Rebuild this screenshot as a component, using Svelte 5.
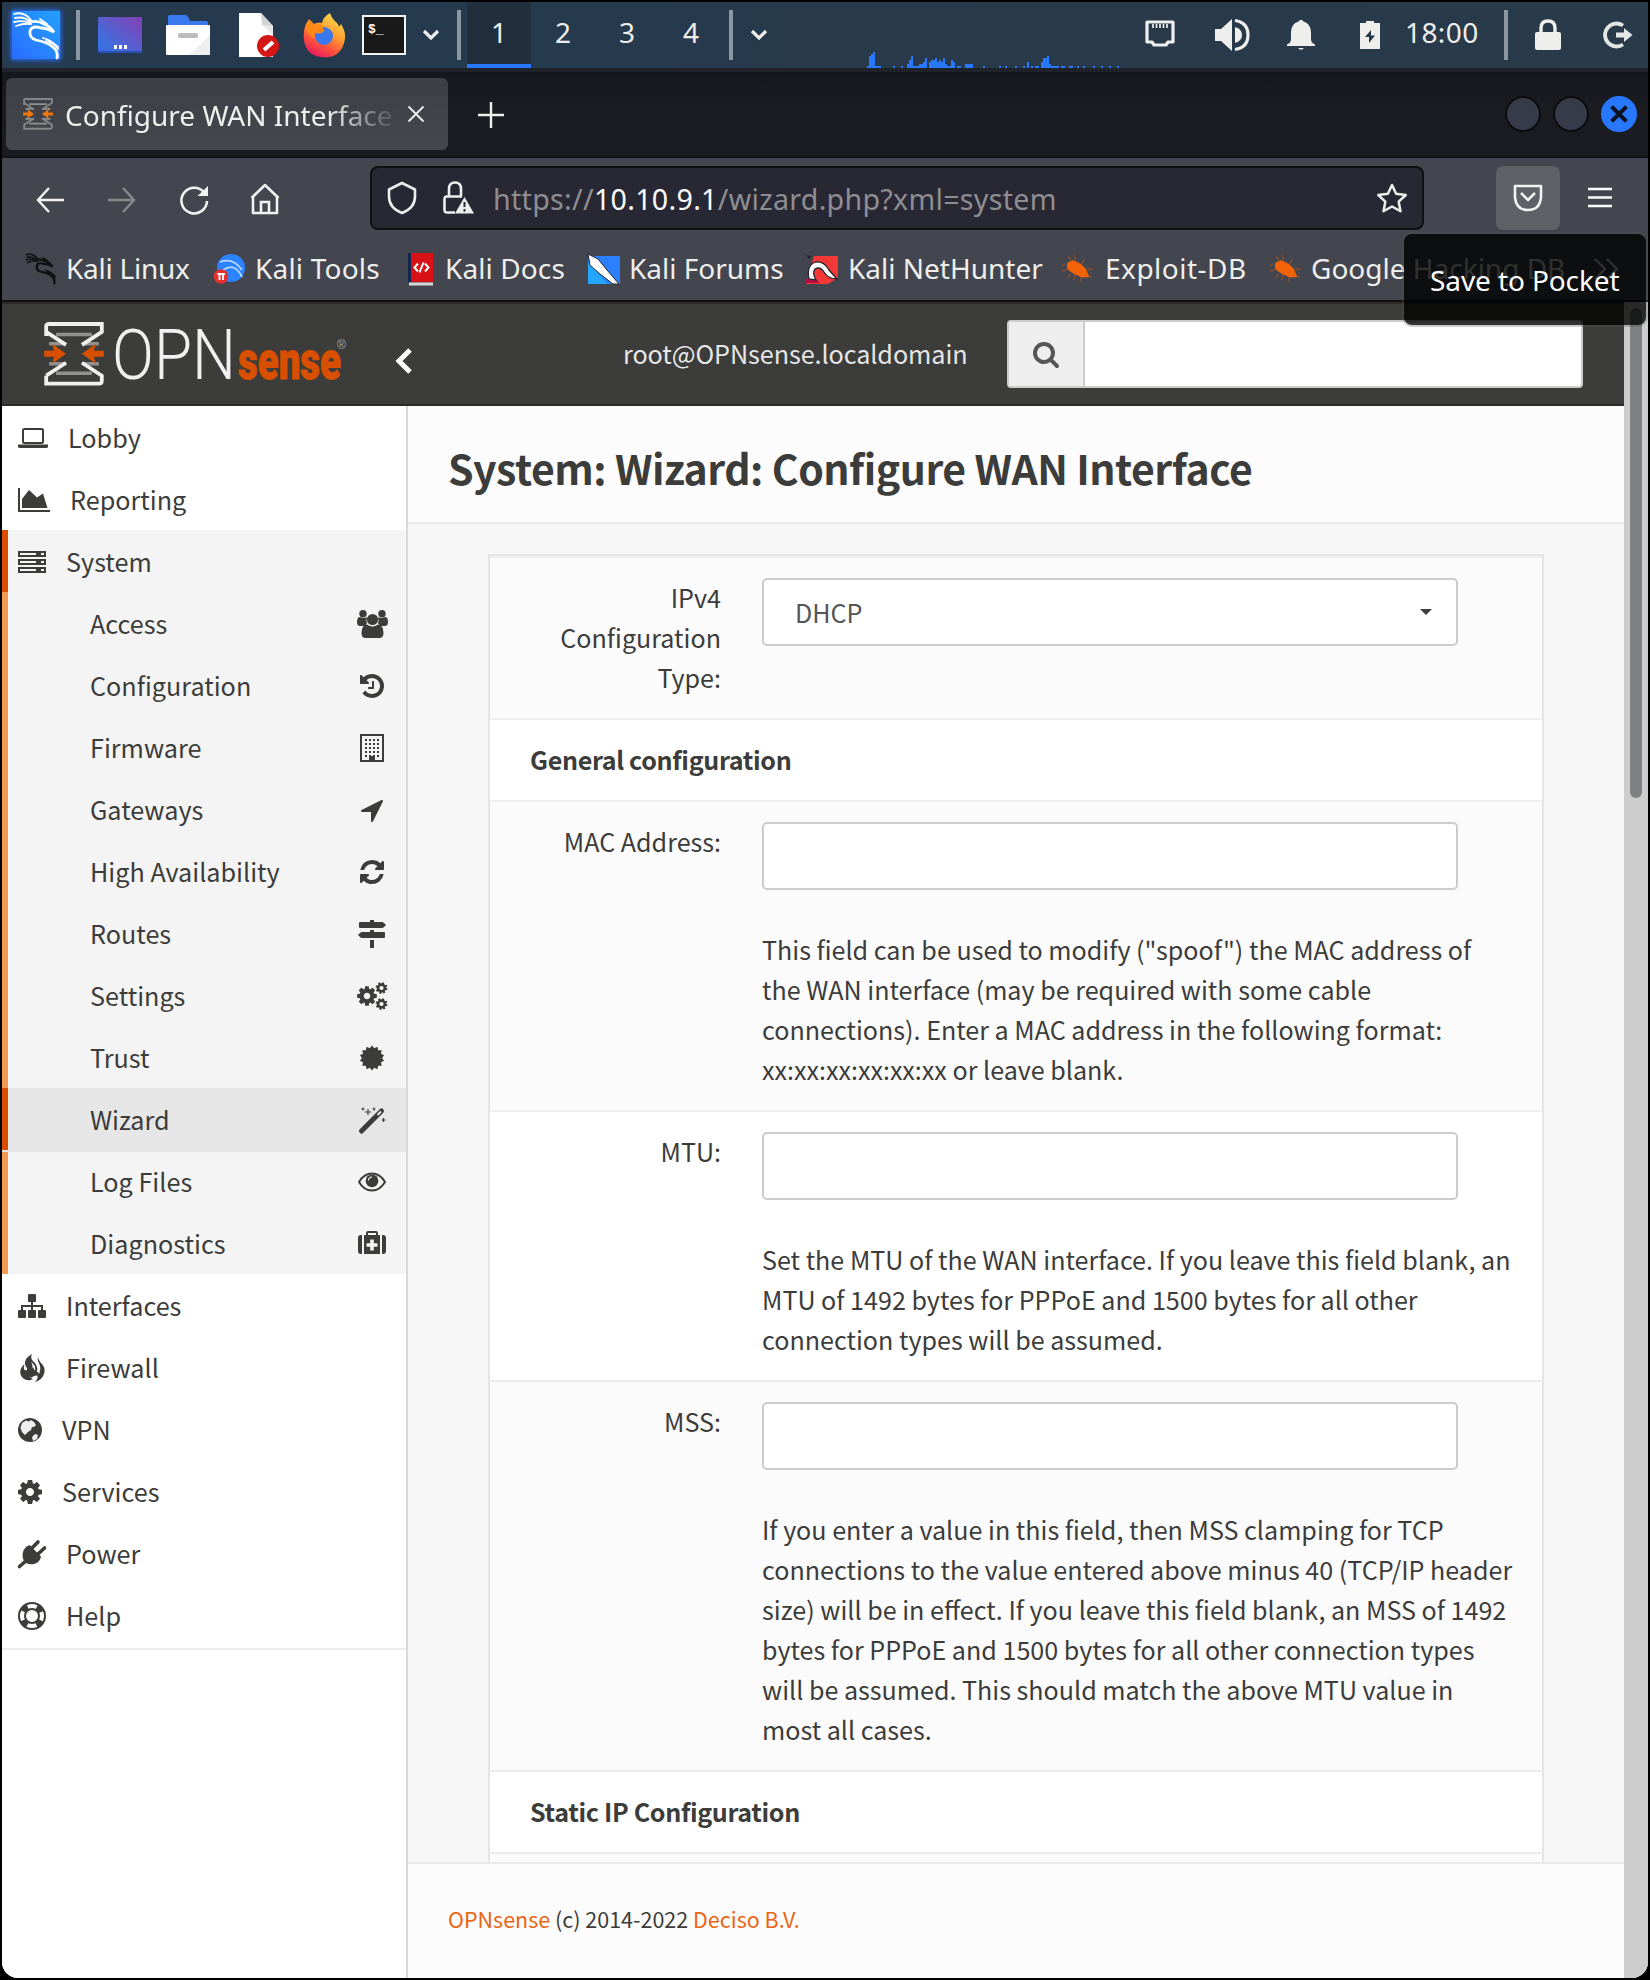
<script>
  const menuTop = [
    { label: 'Lobby', icon: 'laptop', w: 30, gap: 20 },
    { label: 'Reporting', icon: 'area', w: 32, gap: 20 },
    { label: 'System', icon: 'server', w: 28, gap: 20, active: true }
  ];
  const submenu = [
    { label: 'Access', icon: 'users' },
    { label: 'Configuration', icon: 'history' },
    { label: 'Firmware', icon: 'building' },
    { label: 'Gateways', icon: 'arrow' },
    { label: 'High Availability', icon: 'refresh' },
    { label: 'Routes', icon: 'signs' },
    { label: 'Settings', icon: 'cogs' },
    { label: 'Trust', icon: 'certificate' },
    { label: 'Wizard', icon: 'magic', active: true },
    { label: 'Log Files', icon: 'eye' },
    { label: 'Diagnostics', icon: 'medkit' }
  ];
  const menuBottom = [
    { label: 'Interfaces', icon: 'sitemap', w: 28, gap: 20 },
    { label: 'Firewall', icon: 'fire', w: 28, gap: 20 },
    { label: 'VPN', icon: 'globe', w: 24, gap: 20 },
    { label: 'Services', icon: 'cog', w: 24, gap: 20 },
    { label: 'Power', icon: 'plug', w: 28, gap: 20 },
    { label: 'Help', icon: 'ring', w: 28, gap: 20 }
  ];
  const fields = [
    {
      label: 'MAC Address:',
      help: [
        'This field can be used to modify ("spoof") the MAC address of',
        'the WAN interface (may be required with some cable',
        'connections). Enter a MAC address in the following format:',
        'xx:xx:xx:xx:xx:xx or leave blank.'
      ]
    },
    {
      label: 'MTU:',
      white: true,
      help: [
        'Set the MTU of the WAN interface. If you leave this field blank, an',
        'MTU of 1492 bytes for PPPoE and 1500 bytes for all other',
        'connection types will be assumed.'
      ]
    },
    {
      label: 'MSS:',
      help: [
        'If you enter a value in this field, then MSS clamping for TCP',
        'connections to the value entered above minus 40 (TCP/IP header',
        'size) will be in effect. If you leave this field blank, an MSS of 1492',
        'bytes for PPPoE and 1500 bytes for all other connection types',
        'will be assumed. This should match the above MTU value in',
        'most all cases.'
      ]
    }
  ];
  // CPU graph: [column, height] pairs, two pixels per column
  const load = [
    [0, 2], [1, 12], [2, 14], [3, 16], [4, 2], [5, 2], [6, 2], [13, 2], [17, 2], [20, 4], [21, 8], [22, 12],
    [23, 2], [24, 2], [25, 2], [26, 4], [27, 4], [28, 6], [29, 10], [31, 6], [32, 8], [33, 8], [34, 10], [35, 6],
    [36, 8], [37, 6], [38, 10], [39, 4], [40, 2], [41, 2], [42, 8], [43, 6], [45, 2], [46, 2], [49, 4], [50, 4],
    [51, 4], [52, 4], [58, 2], [66, 2], [69, 2], [74, 2], [78, 2], [80, 6], [82, 2], [84, 2], [85, 2], [87, 6],
    [88, 10], [89, 10], [90, 12], [91, 4], [92, 2], [93, 2], [94, 2], [95, 2], [97, 2], [98, 2], [101, 2], [102, 2],
    [105, 2], [108, 2], [113, 2], [117, 2], [121, 2], [125, 2]
  ];
  const loadPath = load.map(([c, h]) => `M${c * 2} 16v-${h}h2v${h}z`).join('');

  const star = (cx, cy, n, r1, r2) =>
    Array.from({ length: n * 2 }, (_, i) => {
      const r = i % 2 ? r2 : r1;
      const a = (Math.PI * i) / n - Math.PI / 2;
      return `${(cx + r * Math.cos(a)).toFixed(2)},${(cy + r * Math.sin(a)).toFixed(2)}`;
    }).join(' ');

  const cogPath =
    'M1152 896q0-106-75-181t-181-75-181 75-75 181 75 181 181 75 181-75 75-181zm512-109v222q0 12-8 23t-20 13l-185 28q-19 54-39 91 35 50 107 138 10 12 10 25t-9 23q-27 37-99 108t-94 71q-12 0-26-9l-138-108q-44 23-91 38-16 136-29 186-7 28-36 28h-222q-14 0-24.5-8.5t-11.5-21.5l-28-184q-49-16-90-37l-141 107q-10 9-25 9-14 0-25-11-126-114-165-168-7-10-7-23 0-12 8-23 15-21 51-66.5t54-70.5q-27-50-41-99l-183-27q-13-2-21-12.5t-8-23.5v-222q0-12 8-23t19-13l186-28q14-46 39-92-40-57-107-138-10-12-10-24 0-10 9-23 26-36 98.5-107.5t94.5-71.5q13 0 26 10l138 107q44-23 91-38 16-136 29-186 7-28 36-28h222q14 0 24.5 8.5t11.5 21.5l28 184q49 16 90 37l142-107q9-9 24-9 13 0 25 10 129 119 165 170 7 8 7 22 0 12-8 23-15 21-51 66.5t-54 70.5q26 50 41 98l183 28q13 2 21 12.5t8 23.5z';
</script>

{#snippet icon(name)}
  {#if name === 'laptop'}
    <svg class="fa" width="30" height="28" viewBox="0 0 30 28"><rect x="5" y="5" width="20" height="14" rx="1.5" fill="none" stroke="currentColor" stroke-width="2" /><path d="M0 20.500h30v2q0 1.500-2 1.500H2q-2 0-2-1.500z" fill="currentColor" /></svg>
  {:else if name === 'area'}
    <svg class="fa" width="32" height="28" viewBox="0 0 32 28"><path d="M1 2v23h31" fill="none" stroke="currentColor" stroke-width="2" /><path d="M4 22V13l7-9 8 7.500 6-4L29.500 22z" fill="currentColor" /></svg>
  {:else if name === 'server'}
    <svg class="fa" width="28" height="28" viewBox="0 0 28 28"><path fill="none" stroke="currentColor" stroke-width="2" d="M1 4h26v4H1zM1 12h26v4H1zM1 20h26v4H1z" /><path fill="currentColor" d="M18 4h5v4h-5zM18 12h5v4h-5zM18 20h5v4h-5z" /></svg>
  {:else if name === 'users'}
    <svg class="fa" width="31" height="28" viewBox="0 0 31 28" fill="currentColor"><circle cx="6" cy="3.700" r="3.700" /><circle cx="25" cy="3.700" r="3.700" /><path d="M0 12q0-5 3-5 4 2 7 0-1 4 0 6-1 2-2 3H3q-3 0-3-4zM31 12q0-5-3-5-4 2-7 0 1 4 0 6 1 2 2 3h5q3 0 3-4z" /><circle cx="15.500" cy="9.500" r="5.600" /><path d="M4.500 23q0-8 5.500-8.500 5.500 4 11 0 5.500.5 5.500 8.500 0 5-4 5h-14q-4 0-4-5z" /></svg>
  {:else if name === 'history'}
    <svg class="fa" width="28" height="28" viewBox="0 0 1792 1792" fill="currentColor"><path d="M1664 896q0 156-61 298t-164 245-245 164-298 61q-172 0-327-72.500t-264-204.500q-7-10-6.500-22.500t8.500-20.500l137-138q10-9 25-9 16 2 23 12 73 95 179 147t225 52q104 0 198.500-40.500t163.500-109.500 109.500-163.500 40.500-198.500-40.500-198.500-109.500-163.500-163.500-109.500-198.500-40.500q-98 0-188 35.500t-160 101.500l137 138q31 30 14 69-17 40-59 40h-448q-26 0-45-19t-19-45v-448q0-42 40-59 39-17 69 14l130 129q107-101 244.500-156.500t284.500-55.500q156 0 298 61t245 164 164 245 61 298zm-640-288v448q0 14-9 23t-23 9h-320q-14 0-23-9t-9-23v-64q0-14 9-23t23-9h224v-352q0-14 9-23t23-9h64q14 0 23 9t9 23z" /></svg>
  {:else if name === 'building'}
    <svg class="fa" width="24" height="28" viewBox="0 0 24 28"><path d="M1 1h22v26H1z" fill="none" stroke="currentColor" stroke-width="2" /><path d="M5 6h15M5 10h15M5 14h15M5 18h15M5 22h15" stroke="currentColor" stroke-width="2" stroke-dasharray="2 2" /><path d="M9 22h6v5H9z" fill="currentColor" /></svg>
  {:else if name === 'arrow'}
    <svg class="fa" width="28" height="28" viewBox="0 0 1792 1792" fill="currentColor"><path d="M1593 349l-640 1280q-17 35-57 35-5 0-15-2-22-5-35.500-22.500t-13.500-39.500v-576h-576q-22 0-39.500-13.500t-22.500-35.500 4-42 29-30l1280-640q13-7 29-7 27 0 45 19 15 14 18.500 34.500t-6.500 39.500z" /></svg>
  {:else if name === 'refresh'}
    <svg class="fa" width="28" height="28" viewBox="0 0 1792 1792" fill="currentColor"><path d="M1639 1056q0 5-1 7-64 268-268 434.500t-478 166.500q-146 0-282.500-55t-243.500-157l-129 129q-19 19-45 19t-45-19-19-45v-448q0-26 19-45t45-19h448q26 0 45 19t19 45-19 45l-137 137q71 66 161 102t187 36q134 0 250-65t186-179q11-17 53-117 8-23 30-23h192q13 0 22.500 9.500t9.500 22.500zm25-800v448q0 26-19 45t-45 19h-448q-26 0-45-19t-19-45 19-45l138-138q-148-137-349-137-134 0-250 65t-186 179q-11 17-53 117-8 23-30 23h-199q-13 0-22.500-9.500t-9.500-22.500v-7q65-268 270-434.500t480-166.500q146 0 284 55.500t245 156.500l130-129q19-19 45-19t45 19 19 45z" /></svg>
  {:else if name === 'signs'}
    <svg class="fa" width="28" height="28" viewBox="0 0 28 28" fill="currentColor"><path d="M12 0h4v2h8q1 0 2 1l2 2-2 2q-1 1-2 1H2Q1 8 1 7V3q0-1 1-1h10zM12 10h4v2h10q1 0 1 1v4q0 1-1 1H4q-1 0-2-1l-2-2 2-2q1-1 2-1h8zM12 20h4v8h-4z" /></svg>
  {:else if name === 'cogs'}
    <svg class="fa" width="31" height="28" viewBox="0 0 31 28"><g fill="currentColor" transform="translate(-1.500 2.500) scale(.0128)"><path d={cogPath} /></g><g fill="none" stroke="currentColor"><circle cx="24.500" cy="6" r="3.400" stroke-width="2.600" /><circle cx="24.500" cy="6" r="5" stroke-width="1.800" stroke-dasharray="2 1.930" /><circle cx="24.500" cy="22" r="3.400" stroke-width="2.600" /><circle cx="24.500" cy="22" r="5" stroke-width="1.800" stroke-dasharray="2 1.930" /></g></svg>
  {:else if name === 'certificate'}
    <svg class="fa" width="28" height="28" viewBox="0 0 28 28" fill="currentColor"><polygon points={star(14, 14, 14, 12.400, 10)} /></svg>
  {:else if name === 'magic'}
    <svg class="fa" width="28" height="28" viewBox="0 0 28 28"><path d="M3.500 25L23.500 5" stroke="currentColor" stroke-width="5" stroke-linecap="round" /><path d="M19.500 9L23 5.500" stroke="#e6e6e6" stroke-width="2" /><path d="M10 3v6M7 6h6M5 1.500v3M3.500 3h3M16 1.500v3M14.500 3h3M25.500 12v4M23.500 14h4" stroke="currentColor" stroke-width="1.100" /></svg>
  {:else if name === 'eye'}
    <svg class="fa" width="28" height="28" viewBox="0 0 28 28"><path d="M1 14Q6 5.500 14 5.500T27 14Q22 22.500 14 22.500T1 14z" fill="none" stroke="currentColor" stroke-width="2" /><circle cx="14" cy="12.800" r="6.400" fill="currentColor" /><path d="M10.500 12.500q0-3.300 3.500-3.500" fill="none" stroke="#f4f4f4" stroke-width="1.200" /></svg>
  {:else if name === 'medkit'}
    <svg class="fa" width="28" height="28" viewBox="0 0 28 28" fill="currentColor"><path d="M9 6V3q0-1 1-1h8q1 0 1 1v3" fill="none" stroke="currentColor" stroke-width="2" /><path d="M6 5h16v19H6zM4 5v19H3q-3 0-3-3V8q0-3 3-3zM24 5v19h1q3 0 3-3V8q0-3-3-3z" /><path d="M12.200 9.500h3.600v3.700h3.700v3.600h-3.700v3.700h-3.600v-3.700H8.500v-3.600h3.700z" fill="#f4f4f4" /></svg>
  {:else if name === 'sitemap'}
    <svg class="fa" width="28" height="28" viewBox="0 0 28 28"><path d="M4 19v-5h20v5M14 8v11" fill="none" stroke="currentColor" stroke-width="2" /><g fill="currentColor"><rect x="10" y="2" width="8" height="8" rx="1" /><rect y="18" width="8" height="8" rx="1" /><rect x="10" y="18" width="8" height="8" rx="1" /><rect x="20" y="18" width="8" height="8" rx="1" /></g></svg>
  {:else if name === 'fire'}
    <svg class="fa" width="28" height="28" viewBox="0 0 28 28" fill="currentColor"><path d="M14 0c-7 4-9 9-5 14 1 3-2 3-3 1-.5-2 0-3 .5-5C2 14 1 19 4 23c3 4 8 4 11 2-4-1-5-5-2-9 2-3 2-5 0-8 3 2 5 5 4 8-1 2 1 3 2 1s0-5-2-8c-3-3-5-5-3-9z" /><path d="M20 3c1 5 4 6 6 10 2 5-1 13-9 15 3-3 3-5 2-7 2 0 4-4 3-9-1-4-3-5-2-9z" /><path d="M9 14q3 3 6-1l2 4 3 1 1 3-5 1-3 2-4-4z" /></svg>
  {:else if name === 'globe'}
    <svg class="fa" width="24" height="28" viewBox="0 0 24 28"><circle cx="12" cy="14" r="12" fill="currentColor" /><path d="M4 7l4-2.500 3 1 2-1.500 3 2 2 3-2 2-2 0-1 3-3 2-3 3-3-3-1.500-4zM17 18l3 1-1 4-4 2-1-4z" fill="#fff" opacity=".92" /></svg>
  {:else if name === 'cog'}
    <svg class="fa" width="24" height="28" viewBox="128 0 1536 1792" fill="currentColor"><path d={cogPath} /></svg>
  {:else if name === 'plug'}
    <svg class="fa" width="28" height="28" viewBox="0 0 28 28"><path d="M1.500 26.500L9 20M14 8l6-6M20 14l6.500-6" stroke="currentColor" stroke-width="3.600" stroke-linecap="round" /><path d="M11.500 5L23 16.500q-1 6-7 7.500-6 1-10-2.500Q3 15 6 9.500 8 6 11.500 5z" fill="currentColor" /></svg>
  {:else if name === 'ring'}
    <svg class="fa" width="28" height="28" viewBox="0 0 28 28" fill="none" stroke="currentColor"><circle cx="14" cy="14" r="13" stroke-width="2" /><circle cx="14" cy="14" r="7" stroke-width="2" /><circle cx="14" cy="14" r="10" stroke-width="6" stroke-dasharray="6.500 9.208" stroke-dashoffset="-4.600" /></svg>
  {/if}
{/snippet}

{#snippet hourglass(size, steel, accent)}
  <svg width={size} height={size * 1.06} viewBox="0 0 60 64"><g fill="none" stroke="#919191" stroke-width="3.500"><path d="M12 12.500h36M12 51.500h36M5 22h17M38 22h17M5 42h17M38 42h17" /></g><g fill="none" stroke={steel} stroke-width="3.800"><path d="M2 14V4q0-2 3-2h53v8L38 23M2 10l20 13M2 54v8h53q3 0 3-3v-5L38 41M2 54l20-13" /></g><g fill={accent}><path d="M0 29h10l-2-7 14 10-14 10 2-7H0zM60 29H50l2-7-14 10 14 10-2-7h10z" /></g></svg>
{/snippet}

{#snippet beetle()}
  <svg width="31" height="28" viewBox="0 0 31 28"><path d="M9 5L6 1M14 5L12 0M20 9l2-5M25 14h6M3 9l-3 2M5 15l-5 1M9 19l-4 4M14 20l-3 5M19 21v6M26 20l4 3" stroke="#8a5136" stroke-width="1.300" /><path d="M5 8l6-3 8 4 5 5 3 8-7 .5-8-3.500-7-5z" fill="#f26207" /></svg>
{/snippet}

<div class="screen">
  <header class="panel">
    <svg class="kali" width="64" height="64" viewBox="0 0 64 64">
      <defs>
        <linearGradient id="k" x1="0" y1="1" x2="1" y2="0"><stop offset="0" stop-color="#2a6cff" /><stop offset="1" stop-color="#22a2ff" /></linearGradient>
        <filter id="glow" x="-30%" y="-30%" width="160%" height="160%"><feGaussianBlur stdDeviation="2.500" /></filter>
      </defs>
      <rect x="7" y="7" width="50" height="50" rx="3" fill="#2671ff" filter="url(#glow)" />
      <rect x="8" y="8" width="48" height="48" fill="url(#k)" />
      <g fill="none" stroke="#fff" stroke-linecap="round"><path d="M10 11q10-3 17 6M11 15q9-2 16 4M10 19q9-2 17 1M12 23q8-3 15-2" stroke-width="1.800" /><path d="M25 19q9-2 15 2 6 2 10 8-7-4-13-4-9-3-11 3-1 7 6 9 14 3 19 9 3 4 2 9" stroke-width="2.800" /><path d="M36 16l7 5M42 38q8 2 12 8M39 35q8 2 15 9" stroke-width="1.800" /></g>
    </svg>
    <i class="sep s1"></i>
    <svg class="p-desk" width="44" height="36" viewBox="0 0 44 36"><defs><linearGradient id="d" x1="0" y1="1" x2="1" y2="0"><stop offset=".2" stop-color="#3d70df" /><stop offset="1" stop-color="#8540b4" /></linearGradient></defs><rect width="44" height="36" rx="1" fill="url(#d)" /><path d="M0 35h44" stroke="#2b50b5" stroke-width="2" /><path d="M16 30h3M21 30h3M26 30h3" stroke="#fff" stroke-width="4" /></svg>
    <svg class="p-folder" width="44" height="42" viewBox="0 0 44 42"><path d="M2 12V3q0-2 2-2h15q3 0 4 4l1 2h16q2 0 2 2v3z" fill="#397bee" /><rect y="11" width="44" height="30" rx="1" fill="#fff" /><path d="M23 41L44 21v20z" fill="#efefef" /><rect x="12" y="19" width="20" height="5" rx="2" fill="#bdbdbd" /></svg>
    <svg class="p-doc" width="42" height="46" viewBox="0 0 42 46"><path d="M1 1h22l12 13v31H1z" fill="#fff" /><path d="M23 1l12 13-11-1z" fill="#d2d2d2" /><path d="M24 13l11 10V14z" fill="#e7e7e7" /><circle cx="30" cy="34" r="11" fill="#d51616" /><path d="M26 38l9-8" stroke="#fff" stroke-width="4" /></svg>
    <svg class="p-fox" width="43" height="46" viewBox="0 0 43 46"><defs><linearGradient id="f" x1=".8" y1="0" x2=".3" y2="1"><stop offset="0" stop-color="#ffe04b" /><stop offset=".45" stop-color="#ff9a30" /><stop offset=".75" stop-color="#ff4a3f" /><stop offset="1" stop-color="#e01c62" /></linearGradient></defs><path d="M3 12l3-5 5 5q4-2 8-1 1-6 8-10 2 6 6 9 3 3 3 5l2-3q5 8 4 15Q39 45 22 45.500 3 45 1 28 0 18 3 12z" fill="url(#f)" /><circle cx="21" cy="24" r="9" fill="#3978ee" /><path d="M3 16l3-8 6 5q5-2 8 1-1 4 2 4-4 5-9 3-2 0-2 6-7-5-8-11z" fill="#ff8a16" /></svg>
    <div class="terminal"><span>$_</span></div>
    <svg class="p-c1" width="18" height="12" viewBox="0 0 18 12"><path d="M2 2l7 7 7-7" fill="none" stroke="#eeeeec" stroke-width="3.200" /></svg>
    <i class="sep s2"></i>
    <div class="ws on">1</div>
    <div class="ws">2</div>
    <div class="ws">3</div>
    <div class="ws">4</div>
    <i class="sep s3"></i>
    <svg class="p-c2" width="18" height="12" viewBox="0 0 18 12"><path d="M2 2l7 7 7-7" fill="none" stroke="#eeeeec" stroke-width="3.200" /></svg>
    <svg class="graph" width="252" height="16" viewBox="0 0 252 16"><path d={loadPath} fill="#2777ff" /></svg>
    <svg class="p-net" width="30" height="28" viewBox="0 0 30 28"><path d="M2 2h26v20h-5l-2 3H9l-2-3H2z" fill="none" stroke="#eeeeec" stroke-width="3.200" stroke-linejoin="round" /><path d="M8 4v4M11.500 4v4M15 4v4M18.500 4v4M22 4v4" stroke="#eeeeec" stroke-width="1.700" /></svg>
    <svg class="p-vol" width="36" height="34" viewBox="0 0 36 34"><path d="M0 11h6L17 1v32L6 23H0z" fill="#eeeeec" /><path d="M20 9q7 2 7 8t-7 8z" fill="#eeeeec" /><path d="M20 2.500q13 2 13 14.500T20 31.500" fill="none" stroke="#eeeeec" stroke-width="3.200" /></svg>
    <svg class="p-bell" width="28" height="32" viewBox="0 0 28 32" fill="#eeeeec"><path d="M11.500 2.500q2.500-3.500 5 0Q24 5 24 13v7q0 4 4 5.500V27H0v-1.500Q4 24 4 20v-7q0-8 7.500-10.500zM11 29h6q-3 3.500-6 0z" /></svg>
    <svg class="p-bat" width="20" height="28" viewBox="0 0 20 28"><path d="M6 0h8v2h6v26H0V2h6z" fill="#eeeeec" /><path d="M11 9l-6 7h4v6l6-7.500h-4z" fill="#28394a" /></svg>
    <span class="clock">18:00</span>
    <i class="sep s4"></i>
    <svg class="p-lock" width="26" height="32" viewBox="0 0 26 32"><rect y="13" width="26" height="18" rx="2" fill="#eeeeec" /><path d="M6 15V9q0-7 7-7t7 7v6" fill="none" stroke="#eeeeec" stroke-width="3.400" /></svg>
    <svg class="p-out" width="31" height="28" viewBox="0 0 31 28"><path d="M21 4.500A11.500 11.500 0 1 0 21 23.500" fill="none" stroke="#e4e6e6" stroke-width="3.800" /><path d="M14 11.500h8V7l8.500 7-8.500 7v-4.500h-8z" fill="#e4e6e6" /></svg>
  </header>

  <div class="tabs">
    <div class="tab">
      {@render hourglass(30, '#848688', '#ee7711')}
      <span class="tab-title">Configure WAN Interface</span>
      <svg width="18" height="18" viewBox="0 0 18 18"><path d="M1.500 1.500l15 15M16.500 1.500l-15 15" stroke="#e8e8e8" stroke-width="2" /></svg>
    </div>
    <svg class="plus" width="26" height="26" viewBox="0 0 26 26"><path d="M13 0v26M0 13h26" stroke="#eeeeec" stroke-width="2.400" /></svg>
    <div class="controls">
      <i></i><i></i>
      <i class="close"><svg width="18" height="18" viewBox="0 0 18 18"><path d="M3 3l12 12M15 3L3 15" stroke="#0d1220" stroke-width="4" stroke-linecap="square" /></svg></i>
    </div>
  </div>

  <nav class="toolbar">
    <svg class="t-back" width="28" height="28" viewBox="0 0 28 28"><path d="M13 2L2 14l11 12M2 14h26" fill="none" stroke="#f2f2f2" stroke-width="2.400" /></svg>
    <svg class="t-fwd" width="28" height="28" viewBox="0 0 28 28"><path d="M15 2l11 12-11 12M26 14H0" fill="none" stroke="#87898d" stroke-width="2.400" /></svg>
    <svg class="t-rel" width="30" height="30" viewBox="0 0 30 30"><path d="M25.500 8A12.800 12.800 0 1 0 28 16" fill="none" stroke="#f2f2f2" stroke-width="2.600" /><path d="M29 1v10H18.500z" fill="#f2f2f2" /></svg>
    <svg class="t-home" width="30" height="32" viewBox="0 0 30 32"><path d="M1.500 15L15 2l13.500 13M3 14v16h24V14" fill="none" stroke="#f2f2f2" stroke-width="2.600" stroke-linejoin="round" /><path d="M11 30V19h8v11" fill="none" stroke="#f2f2f2" stroke-width="2.600" /></svg>
    <div class="url">
      <svg class="u-shield" width="30" height="34" viewBox="0 0 30 34"><path d="M15 2l13 6.500v7Q28 27 15 32 2 27 2 15.500v-7z" fill="none" stroke="#eeeeef" stroke-width="2.600" stroke-linejoin="round" /></svg>
      <svg class="u-lock" width="31" height="34" viewBox="0 0 31 34"><path d="M6 15V8q0-6.500 6-6.500T18 8v7M12 31.500H4q-2.500 0-2.500-2.500V18q0-2.500 2.500-2.500h15" fill="none" stroke="#eeeeef" stroke-width="2.600" /><path d="M21.500 16L31 32.500H12z" fill="#eeeeef" /><path d="M21.500 21v5M21.500 28v2.500" stroke="#282833" stroke-width="2" /></svg>
      <span class="addr">https://<b>10.10.9.1</b>/wizard.php?xml=system</span>
      <svg class="u-star" width="32" height="33" viewBox="0 0 32 33"><polygon points={star(16, 17.500, 5, 14.500, 7)} fill="none" stroke="#eeeeef" stroke-width="2.500" stroke-linejoin="round" /></svg>
    </div>
    <div class="pocket"><svg width="30" height="28" viewBox="0 0 30 28"><path d="M2 2h26v11Q27 26 15 26T2 13z" fill="none" stroke="#f2f2f2" stroke-width="2.600" stroke-linejoin="round" /><path d="M8 9l7 7 7-7" fill="none" stroke="#f2f2f2" stroke-width="2.600" /></svg></div>
    <svg class="t-menu" width="24" height="22" viewBox="0 0 24 22"><path d="M0 2h24M0 10.500h24M0 19h24" stroke="#fbfbfe" stroke-width="2.400" /></svg>
  </nav>

  <div class="bookmarks">
    <a class="bm b1"><svg width="32" height="34" viewBox="8 8 49 50"><g fill="none" stroke="#101214" stroke-linecap="round"><path d="M10 11q10-3 17 6M11 15q9-2 16 4M10 19q9-2 17 1M12 23q8-3 15-2" stroke-width="2.400" /><path d="M25 19q9-2 15 2 6 2 10 8-7-4-13-4-9-3-11 3-1 7 6 9 14 3 19 9 3 4 2 9" stroke-width="3.800" /><path d="M36 16l7 5M42 38q8 2 12 8M39 35q8 2 15 9" stroke-width="2.400" /></g></svg><span>Kali Linux</span></a>
    <a class="bm b2"><svg width="31" height="32" viewBox="0 0 31 32"><circle cx="17" cy="15" r="14" fill="#2b83ff" /><path d="M6 9q13-5 22 8M9 17q12-8 19 7" fill="none" stroke="#b9d8ff" stroke-width="1.800" /><circle cx="7" cy="23.500" r="7.300" fill="#e5322f" /><path d="M3.500 21h7.500M5.500 21v6M9 21v6" stroke="#fff" stroke-width="1.800" /></svg><span>Kali Tools</span></a>
    <a class="bm b3"><svg width="25" height="33" viewBox="0 0 25 33"><path d="M0 0h25v29H0z" fill="#d81216" /><path d="M1.500 0v29" stroke="#12264f" stroke-width="3" /><path d="M1 31h24" stroke="#d8d8d8" stroke-width="3" /><path d="M10 10.500l-3.500 4 3.500 4M17 10.500l3.500 4-3.500 4M15.500 9.500l-4 10" fill="none" stroke="#fff" stroke-width="2" /></svg><span>Kali Docs</span></a>
    <a class="bm b4"><svg width="33" height="31" viewBox="0 0 33 31"><path d="M0 2h32v28H0z" fill="#2a80ff" /><path d="M0 8l20 22H0z" fill="#24a6ff" /><path d="M0 0l10 5 9 11 12 14H25L12 20 2 11z" fill="#fff" stroke="#23262c" stroke-width="1" /></svg><span>Kali Forums</span></a>
    <a class="bm b5"><svg width="32" height="31" viewBox="0 0 32 31"><path d="M8 2h24v22L22 30H0z" fill="#f33838" /><path d="M0 25l8-2 6 6H0z" fill="#b41047" /><path d="M0 1l6 1-3 3z" fill="#23262c" /><path d="M3 25Q0 11 10 8q8-1 13 8l8 9q-9 0-13-7-4-6-9-3-3 4 1 11z" fill="#fff" stroke="#23262c" stroke-width="1.300" /></svg><span>Kali NetHunter</span></a>
    <a class="bm b6">{@render beetle()}<span>Exploit-DB</span></a>
    <a class="bm b7">{@render beetle()}<span>Google Hacking DB</span></a>
    <svg class="more" width="28" height="22" viewBox="0 0 28 22"><path d="M3 1l10 10L3 21M15 1l10 10-10 10" fill="none" stroke="#eee" stroke-width="2.400" /></svg>
    <div class="tooltip">Save to Pocket</div>
  </div>

  <div class="viewport">
    <div class="page">
      <header class="top">
        <div class="logo">
          {@render hourglass(60, '#f0f0f0', '#d94f00')}
          <svg class="wordmark" width="238" height="68" viewBox="0 0 238 68">
            <text class="opn" x="-4" y="59" textLength="124" lengthAdjust="spacingAndGlyphs">OPN</text>
            <text class="sense" x="122" y="59" textLength="103" lengthAdjust="spacingAndGlyphs">sense</text>
            <text class="reg" x="221" y="29">®</text>
          </svg>
        </div>
        <svg class="collapse" width="18" height="28" viewBox="0 0 18 28"><path d="M15 3L4 14l11 11" fill="none" stroke="#fff" stroke-width="5" /></svg>
        <span class="user">root@OPNsense.localdomain</span>
        <div class="search">
          <div class="addon"><svg width="28" height="28" viewBox="0 0 1792 1792" fill="#555"><path d="M1216 832q0-185-131.500-316.500t-316.500-131.500-316.500 131.500-131.500 316.500 131.500 316.500 316.500 131.500 316.500-131.500 131.500-316.500zm512 832q0 52-38 90t-90 38q-54 0-90-38l-343-342q-179 124-399 124-143 0-273.500-55.500t-225-150-150-225-55.500-273.500 55.500-273.500 150-225 225-150 273.500-55.500 273.500 55.500 225 150 150 225 55.500 273.500q0 220-124 399l343 343q37 37 37 90z" /></svg></div>
          <div class="box"></div>
        </div>
      </header>
      <div class="body">
        <aside>
          {#each menuTop as m}
            <div class="item" class:active={m.active}><span class="ic" style:width="{m.w}px" style:margin-right="{m.gap}px">{@render icon(m.icon)}</span>{m.label}</div>
          {/each}
          {#each submenu as s}
            <div class="sub" class:current={s.active}><span>{s.label}</span><span class="ic right">{@render icon(s.icon)}</span></div>
          {/each}
          {#each menuBottom as m}
            <div class="item"><span class="ic" style:width="{m.w}px" style:margin-right="{m.gap}px">{@render icon(m.icon)}</span>{m.label}</div>
          {/each}
          <div class="rule"></div>
        </aside>
        <main>
          <h1>System: Wizard: Configure WAN Interface</h1>
          <section class="content">
            <div class="table">
              <div class="row first">
                <div class="label">IPv4<br />Configuration<br />Type:</div>
                <div class="value"><div class="input select"><span>DHCP</span><i class="caret"></i></div></div>
              </div>
              <div class="group">General configuration</div>
              {#each fields as f}
                <div class="row" class:white={f.white}>
                  <div class="label">{f.label}</div>
                  <div class="value">
                    <div class="input"></div>
                    <p>{#each f.help as line}<span class="line">{line}</span>{/each}</p>
                  </div>
                </div>
              {/each}
              <div class="group">Static IP Configuration</div>
            </div>
          </section>
          <footer><a>OPNsense</a> (c) 2014-2022 <a>Deciso B.V.</a></footer>
        </main>
      </div>
    </div>
    <div class="scroll"><i></i></div>
  </div>
</div>

<style>
  :global(body) { background: #000; }
  .screen {
    box-sizing: border-box; width: 1650px; height: 1980px; border: 2px solid #000; border-radius: 0 0 18px 18px;
    overflow: hidden; display: flex; flex-direction: column; background: #fff;
    font-family: 'Noto Sans', sans-serif; font-size: 28px; color: #eeeeec;
  }
  svg { display: block; flex: none; overflow: visible; }

  .panel { height: 66px; flex: none; display: flex; align-items: center; background: linear-gradient(90deg, #263a50, #263a4e 35%, #28394a 60%, #293a4a); border-bottom: 4px solid #1f2329; }
  .sep { width: 4px; height: 50px; flex: none; background: #8c97a1; }
  .kali { margin-left: 2px; }
  .s1 { margin-left: 8px; }
  .p-desk { margin-left: 18px; }
  .p-folder { margin-left: 24px; }
  .p-doc { margin-left: 28px; }
  .p-fox { margin-left: 23px; }
  .terminal { box-sizing: border-box; width: 44px; height: 40px; margin-left: 16px; margin-right: 16px; flex: none; border: 2px solid #f2f2f2; background: #19191a; color: #fff; font: bold 13px/13px 'Liberation Mono', monospace; padding: 6px 4px; }
  .s2 { margin-left: 17px; margin-right: 6px; }
  .ws { box-sizing: border-box; width: 64px; height: 66px; flex: none; text-align: center; line-height: 61px; }
  .ws.on { background: #212f3d; border-bottom: 4px solid #2777ff; }
  .s3 { margin-left: 6px; margin-right: 17px; }
  .graph { align-self: flex-end; margin-left: 99px; }
  .p-net { margin-left: 26px; margin-bottom: 2px; }
  .p-vol { margin-left: 40px; }
  .p-bell { margin-left: 36px; margin-bottom: 1px; }
  .p-bat { margin-left: 45px; margin-bottom: 1px; }
  .clock { width: 76px; margin-left: 25px; white-space: nowrap; line-height: 61px; height: 66px; letter-spacing: 0.400px; }
  .s4 { margin-left: 23px; }
  .p-lock { margin-left: 27px; }
  .p-out { margin-left: 41px; }

  .tabs { height: 84px; flex: none; display: flex; align-items: center; background: linear-gradient(#14171b, #1b1c21 40%); border-bottom: 2px solid #121317; }
  .tab { box-sizing: border-box; width: 442px; height: 72px; margin-left: 4px; padding-left: 17px; border-radius: 6px; background: linear-gradient(#3e3f45, #45474f); display: flex; align-items: center; }
  .tab-title { width: 338px; margin: 1px 4px 0 12px; white-space: nowrap; overflow: hidden; mask-image: linear-gradient(90deg, #000 78%, transparent 99%); }
  .plus { margin-left: 30px; margin-top: 2px; }
  .controls { display: flex; gap: 12px; margin-left: auto; margin-right: 11px; }
  .controls i { box-sizing: border-box; width: 36px; height: 36px; border-radius: 50%; background: #373a48; border: 2px solid #0b0c0f; display: flex; align-items: center; justify-content: center; }
  .controls .close { background: #2777ff; border-color: #2777ff; }

  .toolbar { height: 80px; flex: none; display: flex; align-items: center; background: #43464e; }
  .t-back { margin-left: 34px; margin-top: 3px; }
  .t-fwd { margin-left: 44px; margin-top: 3px; }
  .t-rel { margin-left: 43px; margin-top: 3px; }
  .t-home { margin-left: 41px; margin-top: 2px; }
  .url { box-sizing: border-box; width: 1054px; height: 64px; margin-left: 90px; flex: none; border: 2px solid #0f1014; border-radius: 8px; background: #282834; display: flex; align-items: center; padding-left: 15px; }
  .u-lock { margin-left: 26px; }
  .addr { flex: 1; margin-left: 19px; color: #8e8e92; white-space: nowrap; font-size: 28.600px; letter-spacing: 0.300px; }
  .addr b { font-weight: 400; color: #fbfbfe; }
  .u-star { margin-right: 14px; }
  .pocket { width: 64px; height: 64px; margin-left: 72px; flex: none; border-radius: 7px; background: #606166; display: flex; align-items: center; justify-content: center; }
  .t-menu { margin-left: 28px; }

  .bookmarks { height: 62px; flex: none; display: flex; align-items: center; background: #43464e; border-bottom: 2px solid #111214; position: relative; z-index: 2; }
  .bm { display: flex; align-items: center; gap: 10px; white-space: nowrap; flex: none; }
  .bm span { line-height: 61px; padding-bottom: 1px; }
  .b1 { margin-left: 23px; width: 189px; gap: 9px; letter-spacing: -0.250px; }
  .b2 { width: 194px; letter-spacing: 0.200px; }
  .b3 { width: 180px; gap: 12px; letter-spacing: 0.100px; }
  .b4 { width: 218px; gap: 8px; }
  .b5 { width: 256px; }
  .b6 { width: 208px; gap: 12px; letter-spacing: 0.500px; }
  .b7 { width: 322px; gap: 10px; }
  .tooltip { position: absolute; left: 1402px; top: -4px; width: 242px; height: 91px; box-sizing: border-box; padding-left: 26px; border-radius: 8px; background: rgba(0, 0, 0, 0.8); box-shadow: 0 0 0 2px rgba(90, 90, 90, 0.3); color: #fff; line-height: 93px; letter-spacing: -0.100px; white-space: nowrap; }

  .viewport { flex: 1; min-height: 0; display: flex; font-family: 'Noto Sans CJK SC', 'Noto Sans', sans-serif; font-size: 25.200px; color: #3c3c3b; }
  .page { width: 1622px; display: flex; flex-direction: column; }
  .top { box-sizing: border-box; height: 104px; flex: none; display: flex; align-items: center; background: #3c3c3b; border-top: 2px solid #2b2b2b; border-bottom: 2px solid #2b2b2b; }
  .logo { display: flex; align-items: center; margin-left: 42px; }
  .wordmark { margin-left: 12px; }
  .opn { font: 300 70px Roboto, sans-serif; fill: #f0f0f0; }
  .sense { font: 900 54px Roboto, sans-serif; fill: #d94f00; stroke: #d94f00; stroke-width: 1px; }
  .reg { font: 12px 'Liberation Sans', sans-serif; fill: #aaa; }
  .collapse { margin-left: 41px; margin-top: 14px; }
  .user { width: 384px; margin-left: 210px; margin-bottom: 2px; color: #e6e6e6; white-space: nowrap; letter-spacing: -0.080px; }
  .search { display: flex; box-sizing: border-box; width: 576px; height: 68px; border: 2px solid #ccc; border-radius: 4px; background: #fff; flex: none; }
  .addon { width: 74px; background: #eee; border-right: 2px solid #ccc; display: flex; align-items: center; justify-content: center; }

  .body { flex: 1; min-height: 0; display: flex; }
  aside { width: 404px; flex: none; background: #fff; border-right: 2px solid #d9d9d9; }
  .item { height: 62px; box-sizing: border-box; display: flex; align-items: center; padding-left: 16px; white-space: nowrap; line-height: 62px; }
  .item.active { background: #f4f4f4; border-left: 6px solid #d94f00; padding-left: 10px; }
  .ic { flex: none; padding-top: 1px; }
  .sub { height: 62px; box-sizing: border-box; display: flex; align-items: center; justify-content: space-between; padding-left: 82px; background: #f4f4f4; border-left: 6px solid #f19b50; line-height: 62px; white-space: nowrap; }
  .sub.current { position: relative; background: #e6e6e6; border-left-color: #d94f00; box-shadow: 0 2px #e6e6e6; }
  .right { width: 68px; display: flex; justify-content: center; padding-top: 2px; }
  .rule { height: 2px; margin: 2px 0 0; background: #ececec; }

  main { flex: 1; min-width: 0; display: flex; flex-direction: column; background: #f6f6f6; }
  h1 { margin: 0; box-sizing: border-box; height: 118px; flex: none; padding-left: 40px; background: #fcfcfc; border-bottom: 2px solid #eaeaea; font-size: 41px; font-weight: 600; line-height: 122px; letter-spacing: -0.500px; white-space: nowrap; }
  .content { flex: 1; min-height: 0; padding: 30px 80px 0; overflow: hidden; }
  .table { box-sizing: border-box; height: 1400px; border: 2px solid #e5e5e5; background: #fbfbfb; line-height: 40px; font-size: 25.100px; }
  .row { display: flex; padding: 19px 0 21px; border-bottom: 2px solid #ededed; background: #fbfbfb; }
  .first { border-top: 2px solid #efefef; }
  .row.white { background: #fff; }
  .label { width: 231px; margin-right: 41px; flex: none; text-align: right; }
  .group { box-sizing: border-box; height: 82px; line-height: 78px; padding-left: 40px; background: #fff; border-bottom: 2px solid #ededed; font-weight: 600; letter-spacing: -0.340px; }
  .input { box-sizing: border-box; width: 696px; height: 68px; margin-top: 1px; border: 2px solid #ccc; border-radius: 5px; background: #fff; }
  .select { display: flex; align-items: center; justify-content: space-between; padding: 0 24px 0 31px; color: #555; }
  .caret { border: 6px solid transparent; border-top-color: #3c3c3b; border-bottom: 0; }
  p { margin: 39px 0 0; }
  .line { display: block; white-space: nowrap; }
  footer { box-sizing: border-box; height: 116px; flex: none; padding-left: 40px; background: #fcfcfc; border-top: 2px solid #eaeaea; font-size: 21.500px; line-height: 110px; white-space: pre; }
  footer a { color: #ea6416; }

  .scroll { flex: 1; background: #cdcdcd; }
  .scroll i { display: block; width: 12px; height: 490px; margin: 6px 0 0 6px; border-radius: 6px; background: #7e8181; }
</style>
